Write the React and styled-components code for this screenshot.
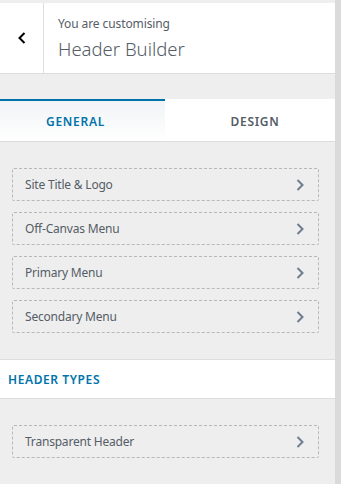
import React from 'react'
import styled, {createGlobalStyle} from 'styled-components'

const GlobalStyle = createGlobalStyle`
  html, body {
    margin: 0;
    padding: 0;
    background: #eeeeee;
    font-family: "Noto Sans", "Open Sans", sans-serif;
  }
  * {
    box-sizing: border-box;
  }
`

const Page = styled.div`
  display: flex;
  width: 341px;
  height: 484px;
  overflow: hidden;
`

const Panel = styled.div`
  flex: 1;
  padding-top: 3px;
`

const Scrollbar = styled.div`
  width: 6px;
  background: #dadada;
`

const Header = styled.div`
  display: flex;
  height: 71px;
  background: #fff;
  border-bottom: 1px solid #dddddd;
`

const BackButton = styled.div`
  width: 44px;
  display: flex;
  align-items: center;
  justify-content: center;
  border-right: 1px solid #dddddd;
`

const TitleBlock = styled.div`
  padding: 12px 0 0 14px;
  color: #555d66;
`

const Caption = styled.div`
  font-size: 12px;
  line-height: 18px;
  letter-spacing: -0.1px;
`

const Heading = styled.div`
  font-size: 18.5px;
  font-weight: 300;
  line-height: 28px;
  margin-top: 2px;
`

const Tabs = styled.div`
  display: flex;
  margin-top: 25px;
  background: #fff;
  border-top: 1px solid #dddddd;
  border-bottom: 1px solid #dddddd;
`

const Tab = styled.div`
  flex: ${p => (p.$active ? '0 0 165px' : '1')};
  height: 42px;
  margin-top: -1px;
  display: flex;
  align-items: center;
  justify-content: center;
  padding: ${p => (p.$active ? '0 14px 0 0' : '0 0 0 10px')};
  font-size: 12px;
  font-weight: 600;
  letter-spacing: 0.7px;
  border-top: 2px solid ${p => (p.$active ? '#0073aa' : 'transparent')};
  color: ${p => (p.$active ? '#0073aa' : '#555d66')};
  background: ${p => (p.$active ? 'linear-gradient(#f1f3f6, #ffffff)' : '#fff')};
`

const List = styled.div`
  display: flex;
  flex-direction: column;
  gap: 11px;
  padding: 26px 16px 26px 12px;
`

const Item = styled.div`
  height: 33px;
  display: flex;
  align-items: center;
  justify-content: space-between;
  padding: 0 14px 0 12px;
  border: 1px dashed #b8b8b8;
  border-radius: 2px;
  font-size: 12px;
  letter-spacing: -0.2px;
  color: #555d66;
`

const SectionTitle = styled.div`
  height: 40px;
  display: flex;
  align-items: center;
  padding-left: 8px;
  background: #fff;
  border-top: 1px solid #dddddd;
  border-bottom: 1px solid #dddddd;
  font-size: 12px;
  font-weight: 600;
  letter-spacing: 0.6px;
  color: #0073aa;
`

function Chevron({color = '#6f7c91', left}) {
  return (
    <svg width="8" height="12" viewBox="0 0 8 12" fill="none">
      <path
        d={left ? 'M6.5 1 L1.5 6 L6.5 11' : 'M1.5 1 L6.5 6 L1.5 11'}
        stroke={color}
        strokeWidth="2"
      />
    </svg>
  )
}

const generalItems = ['Site Title & Logo', 'Off-Canvas Menu', 'Primary Menu', 'Secondary Menu']

export default function App() {
  return (
    <Page>
      <GlobalStyle />
      <Panel>
        <Header>
          <BackButton>
            <Chevron left color="#000" />
          </BackButton>
          <TitleBlock>
            <Caption>You are customising</Caption>
            <Heading>Header Builder</Heading>
          </TitleBlock>
        </Header>
        <Tabs>
          <Tab $active>GENERAL</Tab>
          <Tab>DESIGN</Tab>
        </Tabs>
        <List>
          {generalItems.map((item, index) => (
            <Item key={index}>
              {item}
              <Chevron />
            </Item>
          ))}
        </List>
        <SectionTitle>HEADER TYPES</SectionTitle>
        <List>
          <Item>
            Transparent Header
            <Chevron />
          </Item>
        </List>
      </Panel>
      <Scrollbar />
    </Page>
  )
}
